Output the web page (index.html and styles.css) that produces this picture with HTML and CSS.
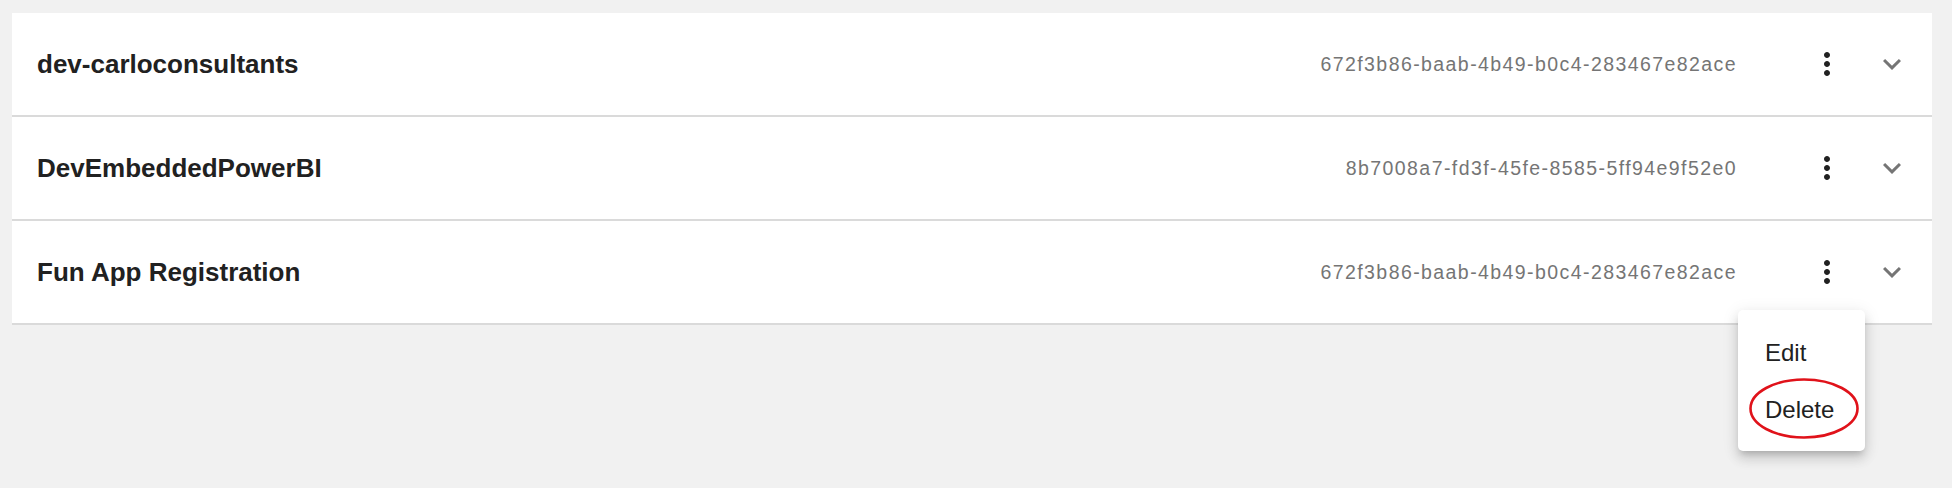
FILE: index.html
```html
<!DOCTYPE html>
<html lang="en">
<head>
<meta charset="utf-8">
<title>App registrations</title>
<link rel="stylesheet" href="styles.css">
</head>
<body>
<main class="page">
  <section class="panels">
    <div class="panel">
      <div class="panel-title">dev-carloconsultants</div>
      <div class="panel-id">672f3b86-baab-4b49-b0c4-283467e82ace</div>
      <button class="icon-btn kebab" aria-label="More">
        <svg viewBox="0 0 24 24" width="36" height="36"><path d="M12 8c1.1 0 2-.9 2-2s-.9-2-2-2-2 .9-2 2 .9 2 2 2zm0 2c-1.1 0-2 .9-2 2s.9 2 2 2 2-.9 2-2-.9-2-2-2zm0 6c-1.1 0-2 .9-2 2s.9 2 2 2 2-.9 2-2-.9-2-2-2z"/></svg>
      </button>
      <span class="icon-btn chevron">
        <svg viewBox="0 0 24 24" width="36" height="36"><path d="M16.59 8.59L12 13.17 7.41 8.59 6 10l6 6 6-6z"/></svg>
      </span>
    </div>
    <div class="panel">
      <div class="panel-title">DevEmbeddedPowerBI</div>
      <div class="panel-id">8b7008a7-fd3f-45fe-8585-5ff94e9f52e0</div>
      <button class="icon-btn kebab" aria-label="More">
        <svg viewBox="0 0 24 24" width="36" height="36"><path d="M12 8c1.1 0 2-.9 2-2s-.9-2-2-2-2 .9-2 2 .9 2 2 2zm0 2c-1.1 0-2 .9-2 2s.9 2 2 2 2-.9 2-2-.9-2-2-2zm0 6c-1.1 0-2 .9-2 2s.9 2 2 2 2-.9 2-2-.9-2-2-2z"/></svg>
      </button>
      <span class="icon-btn chevron">
        <svg viewBox="0 0 24 24" width="36" height="36"><path d="M16.59 8.59L12 13.17 7.41 8.59 6 10l6 6 6-6z"/></svg>
      </span>
    </div>
    <div class="panel">
      <div class="panel-title">Fun App Registration</div>
      <div class="panel-id">672f3b86-baab-4b49-b0c4-283467e82ace</div>
      <button class="icon-btn kebab" aria-label="More">
        <svg viewBox="0 0 24 24" width="36" height="36"><path d="M12 8c1.1 0 2-.9 2-2s-.9-2-2-2-2 .9-2 2 .9 2 2 2zm0 2c-1.1 0-2 .9-2 2s.9 2 2 2 2-.9 2-2-.9-2-2-2zm0 6c-1.1 0-2 .9-2 2s.9 2 2 2 2-.9 2-2-.9-2-2-2z"/></svg>
      </button>
      <span class="icon-btn chevron">
        <svg viewBox="0 0 24 24" width="36" height="36"><path d="M16.59 8.59L12 13.17 7.41 8.59 6 10l6 6 6-6z"/></svg>
      </span>
    </div>

    <div class="menu" role="menu">
      <div class="menu-item">Edit</div>
      <div class="menu-item">Delete</div>
      <svg class="annotation" viewBox="0 0 110 61" width="110" height="61"><ellipse cx="55" cy="30.5" rx="53.5" ry="29" /></svg>
    </div>
  </section>
</main>
</body>
</html>
```
FILE: styles.css
```css
html, body {
  margin: 0;
  padding: 0;
  background: #f1f1f1;
}

body {
  width: 1952px;
  height: 488px;
  overflow: hidden;
  font-family: "Liberation Sans", Arial, Helvetica, sans-serif;
  color: #212121;
}

.page {
  padding: 13px 20px 0 12px;
}

.panels {
  position: relative;
  display: flex;
  flex-direction: column;
}

.panel {
  display: flex;
  align-items: center;
  height: 102px;
  background: #ffffff;
  border-bottom: 2px solid #dadada;
  padding: 0 22px 0 25px;
}

.panel-title {
  flex: 1;
  font-size: 26px;
  font-weight: 700;
  color: #212121;
}

.panel-id {
  font-size: 19.5px;
  letter-spacing: 1.42px;
  color: #757575;
  margin-right: 72px;
}

.icon-btn {
  display: flex;
  align-items: center;
  justify-content: center;
  width: 36px;
  height: 36px;
  padding: 0;
  border: 0;
  background: none;
}

.kebab svg {
  fill: #212121;
}

.chevron {
  margin-left: 29px;
}

.chevron svg {
  fill: #757575;
}

.menu {
  position: absolute;
  top: 297px;
  right: 67px;
  width: 127px;
  box-sizing: border-box;
  padding: 14px 0 13px;
  background: #ffffff;
  border-radius: 5px;
  box-shadow: 0 5px 6px -3px rgba(0, 0, 0, 0.18),
              0 8px 12px 1px rgba(0, 0, 0, 0.1),
              0 3px 16px 2px rgba(0, 0, 0, 0.08);
}

.menu-item {
  height: 57px;
  line-height: 57px;
  padding-left: 27px;
  font-size: 24px;
  color: #212121;
}

.annotation {
  position: absolute;
  left: 11px;
  top: 68px;
  fill: none;
  stroke: #e0121a;
  stroke-width: 2.6;
}
```
